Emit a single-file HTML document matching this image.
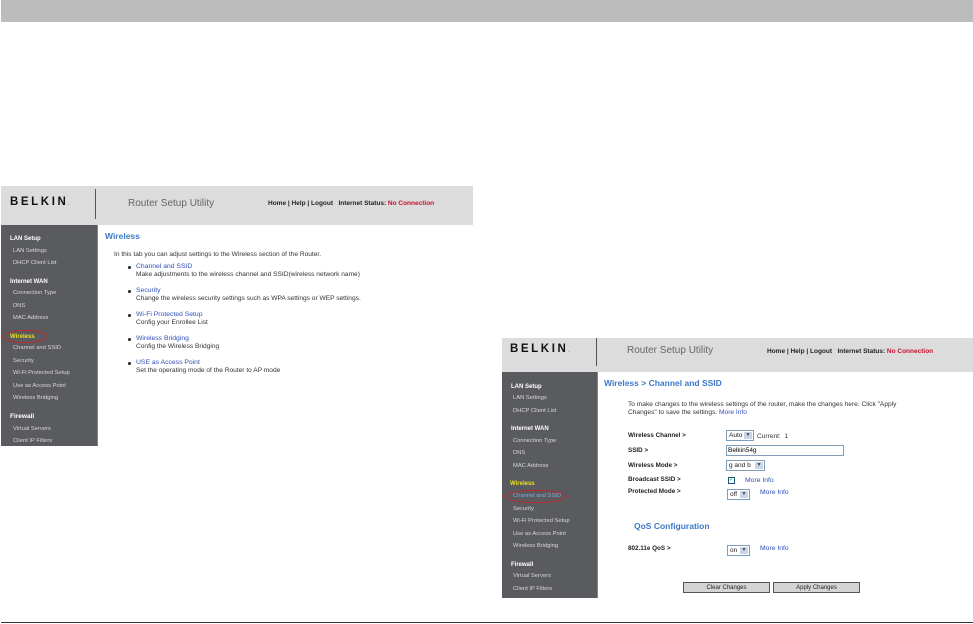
<!DOCTYPE html><html><head><meta charset="utf-8"><style>
*{margin:0;padding:0;box-sizing:border-box}
body{width:973px;height:624px;background:#fff;position:relative;overflow:hidden;font-family:"Liberation Sans",Arial,sans-serif}
.a{position:absolute}
.t{position:absolute;white-space:nowrap;line-height:1}
.hd{background:#dcdcdc}
.sb{background:#5a5b5e;border-right:1px solid #6f88a8}
.sh{color:#fff;font-weight:bold;font-size:6px}
.si{color:#d8d8d8;font-size:5.8px}
.bk{font-weight:bold;font-size:11.5px;letter-spacing:2.6px;color:#111}
.rsu{color:#666;font-size:10px}
.ln{font-size:6.5px;color:#222;font-weight:bold}
.ln b{color:#c8102e}
.bl{color:#3c78c8;font-weight:bold}
.c{font-size:6.6px;color:#333}
.lk{color:#3050b8;font-size:6.8px}
.lab{font-size:6.3px;color:#222;font-weight:bold}
.dot{position:absolute;width:3px;height:3px;border-radius:50%;background:#222}
.sel{position:absolute;border:1px solid #7f9db9;background:#fff;font-size:6.5px;height:11px;line-height:9px;padding-left:2px;color:#222}
.sel i{position:absolute;right:1px;top:1px;width:8px;height:7px;background:#c8d4e8;font-style:normal;font-size:5px;text-align:center;line-height:7px;color:#445}
.btn{position:absolute;background:#d4d4d4;border:1px solid #555;font-size:6px;text-align:center;line-height:10px;color:#222}
.ov{position:absolute;border:1.3px solid #c0272d;border-radius:50%}
</style></head><body>
<div class="a" style="left:1px;top:0;width:972px;height:22px;background:#bcbcbc"></div>
<div class="a" style="left:1px;top:622px;width:972px;height:1px;background:#333"></div>

<!-- screenshot 1 -->
<div class="a hd" style="left:1px;top:186px;width:472px;height:39px"></div>
<div class="t bk" style="left:10px;top:197px">BELKIN<span style="font-size:4px;letter-spacing:0">.</span></div>
<div class="a" style="left:95px;top:189px;width:1px;height:30px;background:#555"></div>
<div class="t rsu" style="left:128px;top:199px">Router Setup Utility</div>
<div class="t ln" style="left:268px;top:201px">Home | Help | Logout &nbsp; Internet Status: <b>No Connection</b></div>
<div class="a sb" style="left:1px;top:225px;width:97px;height:221px"></div>
<div class="t sh" style="left:10px;top:236px">LAN Setup</div>
<div class="t si" style="left:13px;top:249px">LAN Settings</div>
<div class="t si" style="left:13px;top:261px">DHCP Client List</div>
<div class="t sh" style="left:10px;top:279px">Internet WAN</div>
<div class="t si" style="left:13px;top:291px">Connection Type</div>
<div class="t si" style="left:13px;top:304px">DNS</div>
<div class="t si" style="left:13px;top:316px">MAC Address</div>
<div class="t sh" style="left:10px;top:334px;color:#e8e020">Wireless</div>
<div class="ov" style="left:2px;top:330px;width:46px;height:13px"></div>
<div class="t si" style="left:13px;top:346px">Channel and SSID</div>
<div class="t si" style="left:13px;top:359px">Security</div>
<div class="t si" style="left:13px;top:371px">Wi-Fi Protected Setup</div>
<div class="t si" style="left:13px;top:384px">Use as Access Point</div>
<div class="t si" style="left:13px;top:396px">Wireless Bridging</div>
<div class="t sh" style="left:10px;top:414px;font-size:6.5px">Firewall</div>
<div class="t si" style="left:13px;top:427px">Virtual Servers</div>
<div class="t si" style="left:13px;top:439px">Client IP Filters</div>
<div class="t bl" style="left:105px;top:232px;font-size:8.5px">Wireless</div>
<div class="t c" style="left:114px;top:252px">In this tab you can adjust settings to the Wireless section of the Router.</div>
<div class="dot" style="left:128px;top:266px"></div><div class="t lk" style="left:136px;top:264px">Channel and SSID</div><div class="t c" style="left:136px;top:272px">Make adjustments to the wireless channel and SSID(wireless network name)</div>
<div class="dot" style="left:128px;top:290px"></div><div class="t lk" style="left:136px;top:288px">Security</div><div class="t c" style="left:136px;top:296px">Change the wireless security settings such as WPA settings or WEP settings.</div>
<div class="dot" style="left:128px;top:314px"></div><div class="t lk" style="left:136px;top:312px">Wi-Fi Protected Setup</div><div class="t c" style="left:136px;top:320px">Config your Enrollee List</div>
<div class="dot" style="left:128px;top:338px"></div><div class="t lk" style="left:136px;top:336px">Wireless Bridging</div><div class="t c" style="left:136px;top:344px">Config the Wireless Bridging</div>
<div class="dot" style="left:128px;top:362px"></div><div class="t lk" style="left:136px;top:360px">USE as Access Point</div><div class="t c" style="left:136px;top:368px">Set the operating mode of the Router to AP mode</div>

<!-- screenshot 2 -->
<div class="a hd" style="left:502px;top:338px;width:471px;height:34px"></div>
<div class="t bk" style="left:510px;top:344px">BELKIN<span style="font-size:4px;letter-spacing:0">.</span></div>
<div class="a" style="left:596px;top:338px;width:1px;height:28px;background:#555"></div>
<div class="t rsu" style="left:627px;top:346px">Router Setup Utility</div>
<div class="t ln" style="left:767px;top:349px">Home | Help | Logout &nbsp; Internet Status: <b>No Connection</b></div>
<div class="a sb" style="left:502px;top:372px;width:96px;height:226px"></div>
<div class="t sh" style="left:511px;top:384px">LAN Setup</div>
<div class="t si" style="left:513px;top:396px">LAN Settings</div>
<div class="t si" style="left:513px;top:409px">DHCP Client List</div>
<div class="t sh" style="left:511px;top:426px">Internet WAN</div>
<div class="t si" style="left:513px;top:439px">Connection Type</div>
<div class="t si" style="left:513px;top:451px">DNS</div>
<div class="t si" style="left:513px;top:464px">MAC Address</div>
<div class="t sh" style="left:510px;top:481px;color:#e8e020">Wireless</div>
<div class="t si" style="left:513px;top:494px;color:#8aa8d8">Channel and SSID</div>
<div class="ov" style="left:504px;top:490px;width:63px;height:13px"></div>
<div class="t si" style="left:513px;top:507px">Security</div>
<div class="t si" style="left:513px;top:519px">Wi-Fi Protected Setup</div>
<div class="t si" style="left:513px;top:532px">Use as Access Point</div>
<div class="t si" style="left:513px;top:544px">Wireless Bridging</div>
<div class="t sh" style="left:511px;top:562px">Firewall</div>
<div class="t si" style="left:513px;top:574px">Virtual Servers</div>
<div class="t si" style="left:513px;top:587px">Client IP Filters</div>
<div class="t bl" style="left:604px;top:379px;font-size:8.5px">Wireless &gt; Channel and SSID</div>
<div class="t c" style="left:628px;top:402px">To make changes to the wireless settings of the router, make the changes here. Click "Apply</div>
<div class="t c" style="left:628px;top:410px">Changes" to save the settings. <span style="color:#3050b8">More Info</span></div>
<div class="t lab" style="left:628px;top:433px">Wireless Channel &gt;</div>
<div class="sel" style="left:726px;top:430px;width:28px">Auto<i>&#9660;</i></div>
<div class="t c" style="left:757px;top:434px">Current: &nbsp;1</div>
<div class="t lab" style="left:628px;top:448px">SSID &gt;</div>
<div class="sel" style="left:726px;top:445px;width:118px;padding-left:1px;color:#000">Belkin54g</div>
<div class="t lab" style="left:628px;top:463px">Wireless Mode &gt;</div>
<div class="sel" style="left:726px;top:460px;width:39px">g and b<i>&#9660;</i></div>
<div class="t lab" style="left:628px;top:477px">Broadcast SSID &gt;</div>
<div class="a" style="left:728px;top:477px;width:7px;height:7px;border:1px solid #1c5180;background:#fff;font-size:6px;line-height:5px;color:#2a2;text-align:center">&#10003;</div>
<div class="t lk" style="left:745px;top:478px">More Info</div>
<div class="t lab" style="left:628px;top:489px">Protected Mode &gt;</div>
<div class="sel" style="left:727px;top:489px;width:23px">off<i>&#9660;</i></div>
<div class="t lk" style="left:760px;top:490px">More Info</div>
<div class="t bl" style="left:634px;top:522px;font-size:8.5px">QoS Configuration</div>
<div class="t lab" style="left:628px;top:546px">802.11e QoS &gt;</div>
<div class="sel" style="left:727px;top:545px;width:23px">on<i>&#9660;</i></div>
<div class="t lk" style="left:760px;top:546px">More Info</div>
<div class="btn" style="left:683px;top:582px;width:87px;height:11px">Clear Changes</div>
<div class="btn" style="left:773px;top:582px;width:87px;height:11px">Apply Changes</div>
</body></html>
